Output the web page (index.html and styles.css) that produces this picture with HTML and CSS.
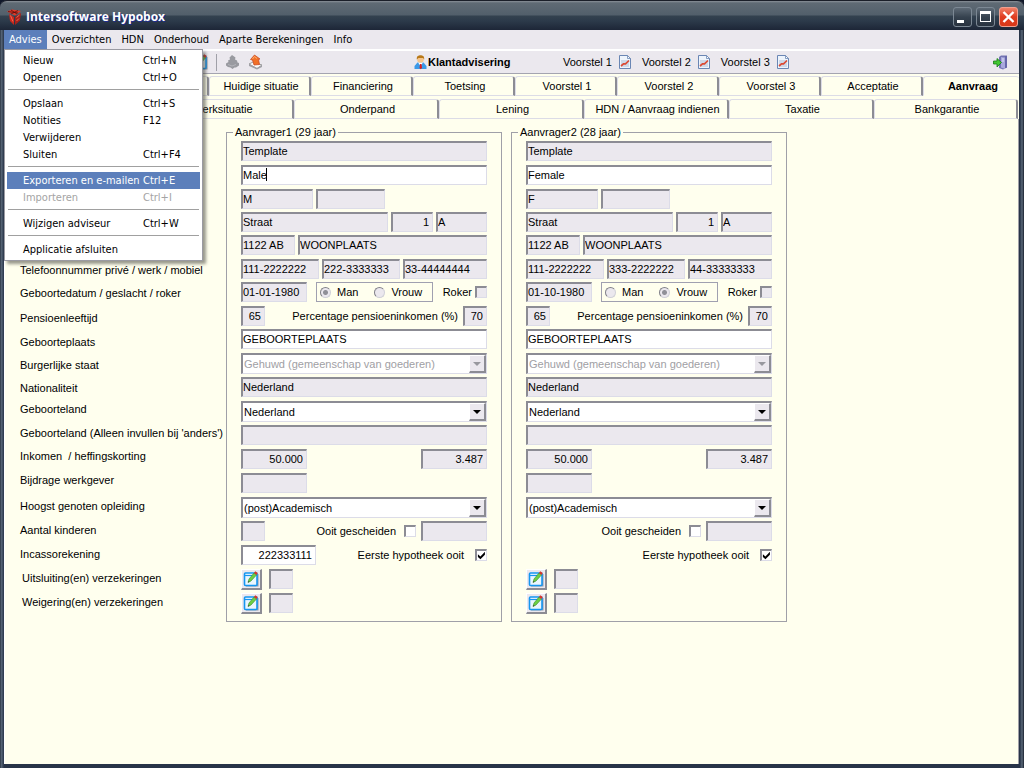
FILE: index.html
```html
<!DOCTYPE html>
<html lang="nl">
<head>
<meta charset="utf-8">
<title>Intersoftware Hypobox</title>
<link rel="stylesheet" href="styles.css">
</head>
<body>
<svg class="symbols" aria-hidden="true">
  <symbol id="i-chart" viewBox="0 0 12 14">
    <path d="M.5.5h8l3 3v10H.5z" fill="#eef4fc" stroke="#6a86b4"/>
    <path d="M8.500 .5v3h3z" fill="#fff" stroke="#6a86b4" stroke-width=".8"/>
    <path d="M2 5h8v7H2z" fill="#cdd8e8"/>
    <path d="M2 11l2.500-2.200h2L10 5.500" fill="none" stroke="#dc4a34" stroke-width="1.700"/>
  </symbol>
  <symbol id="i-edit" viewBox="0 0 16 16">
    <path d="M3 3h12.500v12.500H3z" fill="#8e98a8"/>
    <rect x="1.500" y="2" width="12.500" height="12.500" rx="1" fill="#eaf6ff" stroke="#1696f0" stroke-width="1.600"/>
    <path d="M1.500 4.500h9" stroke="#1696f0" stroke-width="1.200"/>
    <path d="M5 11.500l1-3.500 5-6 2.500 2-5.500 6z" fill="#6cd044" stroke="#3a8a2a" stroke-width=".6"/>
    <path d="M11 2l1.200-1.700 2.600 1.800-1.300 1.900z" fill="#d8352a"/>
    <path d="M5 11.500l.6-1.600 1 .9z" fill="#333"/>
  </symbol>
</svg>
<div class="window">
  <header class="titlebar">
    <svg class="logo" viewBox="0 0 15 16" aria-hidden="true">
      <path d="M2 5l5 3v8l-4-4z" fill="#c8281c"/><path d="M14 4L8 8v8l5-4.500z" fill="#a8201a"/>
      <path d="M0 2.500L5 .5l9 1.500-6 4.500z" fill="#e23a28"/><path d="M1 2.500l10 1.500M4 1l6 4M11 1.500L4 5" stroke="#5a0f0c" stroke-width=".8"/>
      <path d="M3.500 6.500l2.500 6M9.500 8.500l3-2.500M9.500 12l2.500-2.500" stroke="#ff7a60" stroke-width=".8"/>
    </svg>
    <h1>Intersoftware Hypobox</h1>
    <div class="winbuttons">
      <button aria-label="Minimaliseren"><svg viewBox="0 0 17 18"><path d="M3 12h7v3H3z" fill="#fff"/></svg></button>
      <button aria-label="Maximaliseren"><svg viewBox="0 0 17 18"><path d="M3 3h11v11H3zM4 6v7h9V6z" fill="#fff" fill-rule="evenodd"/></svg></button>
      <button class="close" aria-label="Sluiten"><svg viewBox="0 0 17 18"><path d="M3.500 4l10 10M13.500 4l-10 10" stroke="#fff" stroke-width="2.400"/></svg></button>
    </div>
  </header>

  <nav class="menubar">
    <div class="menu">
      <button class="open">Advies</button>
      <div class="popup">
        <button><span>Nieuw</span><span>Ctrl+N</span></button>
        <button><span>Openen</span><span>Ctrl+O</span></button>
        <hr>
        <button><span>Opslaan</span><span>Ctrl+S</span></button>
        <button><span>Notities</span><span>F12</span></button>
        <button><span>Verwijderen</span></button>
        <button><span>Sluiten</span><span>Ctrl+F4</span></button>
        <hr>
        <button class="current"><span>Exporteren en e-mailen</span><span>Ctrl+E</span></button>
        <button disabled><span>Importeren</span><span>Ctrl+I</span></button>
        <hr>
        <button><span>Wijzigen adviseur</span><span>Ctrl+W</span></button>
        <hr>
        <button><span>Applicatie afsluiten</span></button>
      </div>
    </div>
    <button>Overzichten</button>
    <button>HDN</button>
    <button>Onderhoud</button>
    <button>Aparte Berekeningen</button>
    <button>Info</button>
  </nav>

  <div class="toolbar">
    <div class="tools">
      <button aria-label="Bewerken"><svg width="16" height="16"><use href="#i-edit"/></svg></button>
      <span class="divider"></span>
      <button aria-label="Importeren" disabled><svg width="15" height="16" viewBox="0 0 15 16"><path d="M7 1l3.500 2.500-.5 2 2 1 .5 2 1.500.5v2.500L11 13.500H9.500L7.500 15l-2-1.500L3 13l-2-1.500V9.500L3.500 8 3 6.500l2-1-.5-2z" fill="#999aa0"/><path d="M3 10.500l4 1.500 4-1.500" fill="none" stroke="#b4b4ba"/></svg></button>
      <button aria-label="Exporteren"><svg width="15" height="16" viewBox="0 0 15 16"><path d="M1 10l4-2 9 3-5 3.500z" fill="#fafafa" stroke="#888" stroke-width=".8"/><path d="M1 10l8 4 5-3v2l-5 2.500L1 12z" fill="#a0a0a6"/><path d="M2.500 5.500l4-4.500 5.500 4-1.500.5 1 5L6 11 4.500 6z" fill="#f07028" stroke="#c8421a" stroke-width=".7"/><path d="M4.500 5l2-2.500L9 4.500" fill="none" stroke="#ffb070"/></svg></button>
    </div>
    <button class="mode"><svg width="13" height="15" viewBox="0 0 13 15"><path d="M.5 14v-3l3-3.500h6l3 3.500v3z" fill="#3c9ae8"/><path d="M4 7.500h5L6.500 11z" fill="#fff"/><path d="M6 9h1.500l.5 4-1.300 1.200L5.500 13z" fill="#d82020"/><circle cx="6.500" cy="4.500" r="3.300" fill="#f6c58c"/><path d="M2.800 4.500C2.500 1 4.500.3 6.500.3S10.500 1 10.200 4.500L9 3H4.500z" fill="#b87818"/></svg>Klantadvisering</button>
    <div class="proposals">
      <button>Voorstel 1<svg width="12" height="14"><use href="#i-chart"/></svg></button>
      <button>Voorstel 2<svg width="12" height="14"><use href="#i-chart"/></svg></button>
      <button>Voorstel 3<svg width="12" height="14"><use href="#i-chart"/></svg></button>
    </div>
    <button class="exit" aria-label="Afsluiten"><svg width="15" height="15" viewBox="0 0 15 15"><path d="M6 2l2-1.500h6v12L10 14.500 6 13z" fill="#7474b4"/><path d="M8 2l4 .500v11.500l-4-1.500z" fill="#a8a8dc"/><path d="M9 4h2M9 6h2" stroke="#e0e0f8"/><path d="M13 1v12" stroke="#5858a0"/><path d="M.5 6H4V3.500l4.500 4L4 12V9H.5z" fill="#42c832" stroke="#187818" stroke-width=".8"/></svg></button>
  </div>

  <nav class="tabs tabs-main">
    <span class="tab"></span><span class="tab"></span>
    <button class="tab">Huidige situatie</button>
    <button class="tab">Financiering</button>
    <button class="tab">Toetsing</button>
    <button class="tab">Voorstel 1</button>
    <button class="tab">Voorstel 2</button>
    <button class="tab">Voorstel 3</button>
    <button class="tab">Acceptatie</button>
    <button class="tab active">Aanvraag</button>
  </nav>
  <nav class="tabs tabs-sub">
    <span class="tab"></span>
    <button class="tab">Werksituatie</button>
    <button class="tab">Onderpand</button>
    <button class="tab">Lening</button>
    <button class="tab">HDN / Aanvraag indienen</button>
    <button class="tab">Taxatie</button>
    <button class="tab">Bankgarantie</button>
  </nav>

  <main class="content">
    <div class="labels">
      <span>Telefoonnummer privé / werk / mobiel</span>
      <span>Geboortedatum / geslacht / roker</span>
      <span>Pensioenleeftijd</span>
      <span>Geboorteplaats</span>
      <span>Burgerlijke staat</span>
      <span>Nationaliteit</span>
      <span>Geboorteland</span>
      <span>Geboorteland (Alleen invullen bij 'anders')</span>
      <span>Inkomen&nbsp; / heffingskorting</span>
      <span>Bijdrage werkgever</span>
      <span>Hoogst genoten opleiding</span>
      <span>Aantal kinderen</span>
      <span>Incassorekening</span>
      <span class="indent">Uitsluiting(en) verzekeringen</span>
      <span class="indent">Weigering(en) verzekeringen</span>
    </div>

    <fieldset class="applicant">
      <legend>Aanvrager1 (29 jaar)</legend>
      <div class="row"><input class="grow" readonly aria-label="Sjabloon" value="Template"></div>
      <div class="row"><div class="edit grow"><input aria-label="Naam" value="Male"><i class="caret"></i></div></div>
      <div class="row"><input class="w72" readonly aria-label="Voorletters" value="M"><input class="w69" readonly aria-label="Tussenvoegsel"></div>
      <div class="row"><input class="grow" readonly aria-label="Straat" value="Straat"><input class="w42 num" readonly aria-label="Huisnummer" value="1"><input class="w51" readonly aria-label="Toevoeging" value="A"></div>
      <div class="row"><input class="w54" readonly aria-label="Postcode" value="1122 AB"><input class="grow" readonly aria-label="Plaats" value="WOONPLAATS"></div>
      <div class="row"><input class="w78" readonly aria-label="Telefoon privé" value="111-2222222"><input class="w78" readonly aria-label="Telefoon werk" value="222-3333333"><input class="grow" readonly aria-label="Telefoon mobiel" value="33-44444444"></div>
      <div class="row"><input class="w66" readonly aria-label="Geboortedatum" value="01-01-1980"><div class="gender"><label><input type="radio" name="g1" checked disabled>Man</label><label><input type="radio" name="g1" disabled>Vrouw</label></div><label class="tick push">Roker<input type="checkbox" disabled></label></div>
      <div class="row"><input class="w24 num" readonly aria-label="Pensioenleeftijd" value="65"><label class="push" for="p1">Percentage pensioeninkomen (%)</label><input class="w24 num" id="p1" readonly value="70"></div>
      <div class="row"><input class="grow" aria-label="Geboorteplaats" value="GEBOORTEPLAATS"></div>
      <div class="row"><div class="combo off"><select disabled aria-label="Burgerlijke staat"><option>Gehuwd (gemeenschap van goederen)</option></select></div></div>
      <div class="row"><input class="grow" readonly aria-label="Nationaliteit" value="Nederland"></div>
      <div class="row"><div class="combo"><select aria-label="Geboorteland"><option>Nederland</option></select></div></div>
      <div class="row"><input class="grow" readonly aria-label="Geboorteland anders"></div>
      <div class="row"><input class="w66 num" readonly aria-label="Inkomen" value="50.000"><input class="w66 num push" readonly aria-label="Heffingskorting" value="3.487"></div>
      <div class="row"><input class="w66" readonly aria-label="Bijdrage werkgever"></div>
      <div class="row"><div class="combo"><select aria-label="Hoogst genoten opleiding"><option>(post)Academisch</option></select></div></div>
      <div class="row"><input class="w24" readonly aria-label="Aantal kinderen"><label class="tick push">Ooit gescheiden<input type="checkbox"></label><input class="w66" readonly aria-label="Gescheiden sinds"></div>
      <div class="row"><input class="w75 num" aria-label="Incassorekening" value="222333111"><label class="tick wide push">Eerste hypotheek ooit<input type="checkbox" checked></label></div>
      <div class="row"><button class="pen" aria-label="Uitsluitingen bewerken"><svg width="16" height="16"><use href="#i-edit"/></svg></button><input class="w24" readonly aria-label="Uitsluitingen"></div>
      <div class="row"><button class="pen" aria-label="Weigeringen bewerken"><svg width="16" height="16"><use href="#i-edit"/></svg></button><input class="w24" readonly aria-label="Weigeringen"></div>
    </fieldset>

    <fieldset class="applicant">
      <legend>Aanvrager2 (28 jaar)</legend>
      <div class="row"><input class="grow" readonly aria-label="Sjabloon" value="Template"></div>
      <div class="row"><input class="grow" aria-label="Naam" value="Female"></div>
      <div class="row"><input class="w72" readonly aria-label="Voorletters" value="F"><input class="w69" readonly aria-label="Tussenvoegsel"></div>
      <div class="row"><input class="grow" readonly aria-label="Straat" value="Straat"><input class="w42 num" readonly aria-label="Huisnummer" value="1"><input class="w51" readonly aria-label="Toevoeging" value="A"></div>
      <div class="row"><input class="w54" readonly aria-label="Postcode" value="1122 AB"><input class="grow" readonly aria-label="Plaats" value="WOONPLAATS"></div>
      <div class="row"><input class="w78" readonly aria-label="Telefoon privé" value="111-2222222"><input class="w78" readonly aria-label="Telefoon werk" value="333-2222222"><input class="grow" readonly aria-label="Telefoon mobiel" value="44-33333333"></div>
      <div class="row"><input class="w66" readonly aria-label="Geboortedatum" value="01-10-1980"><div class="gender"><label><input type="radio" name="g2" disabled>Man</label><label><input type="radio" name="g2" checked disabled>Vrouw</label></div><label class="tick push">Roker<input type="checkbox" disabled></label></div>
      <div class="row"><input class="w24 num" readonly aria-label="Pensioenleeftijd" value="65"><label class="push" for="p2">Percentage pensioeninkomen (%)</label><input class="w24 num" id="p2" readonly value="70"></div>
      <div class="row"><input class="grow" aria-label="Geboorteplaats" value="GEBOORTEPLAATS"></div>
      <div class="row"><div class="combo off"><select disabled aria-label="Burgerlijke staat"><option>Gehuwd (gemeenschap van goederen)</option></select></div></div>
      <div class="row"><input class="grow" readonly aria-label="Nationaliteit" value="Nederland"></div>
      <div class="row"><div class="combo"><select aria-label="Geboorteland"><option>Nederland</option></select></div></div>
      <div class="row"><input class="grow" readonly aria-label="Geboorteland anders"></div>
      <div class="row"><input class="w66 num" readonly aria-label="Inkomen" value="50.000"><input class="w66 num push" readonly aria-label="Heffingskorting" value="3.487"></div>
      <div class="row"><input class="w66" readonly aria-label="Bijdrage werkgever"></div>
      <div class="row"><div class="combo"><select aria-label="Hoogst genoten opleiding"><option>(post)Academisch</option></select></div></div>
      <div class="row"><label class="tick push">Ooit gescheiden<input type="checkbox"></label><input class="w66" readonly aria-label="Gescheiden sinds"></div>
      <div class="row"><label class="tick wide push">Eerste hypotheek ooit<input type="checkbox" checked></label></div>
      <div class="row"><button class="pen" aria-label="Uitsluitingen bewerken"><svg width="16" height="16"><use href="#i-edit"/></svg></button><input class="w24" readonly aria-label="Uitsluitingen"></div>
      <div class="row"><button class="pen" aria-label="Weigeringen bewerken"><svg width="16" height="16"><use href="#i-edit"/></svg></button><input class="w24" readonly aria-label="Weigeringen"></div>
    </fieldset>
  </main>
</div>
</body>
</html>
```

FILE: styles.css
```css
*, *::before, *::after { box-sizing: border-box; }

body {
  margin: 0;
  background: #10182a;
  color: #000;
  font: 11px/14px "Liberation Sans", Arial, sans-serif;
}

button, input, select { margin: 0; font: inherit; color: inherit; }
button { padding: 0; border: 0; background: none; }
svg { display: block; }
.symbols { position: absolute; width: 0; height: 0; }

/* Window frame */
.window {
  display: flex;
  flex-direction: column;
  min-height: 100vh;
  padding: 0 5px 4px 4px;
  border-radius: 7px 7px 0 0;
  background: linear-gradient(90deg, #18202e 0, #5a6878 1px, #4c5a6c 2px, #283448 4px, #283448 calc(100% - 4px), #5a6878 calc(100% - 2px), #18202e 100%);
}

.titlebar {
  display: flex;
  align-items: center;
  gap: 4px;
  height: 30px;
  margin: 0 -5px 0 -4px;
  padding: 2px 6px 0 7px;
  border-top: 1px solid #1a1e28;
  border-radius: 7px 7px 0 0;
  background: linear-gradient(#8a9098 0, #5f6a74 2px, #525f6b 14px, #33414f 15px, #2c3a4a 20px, #1d2637 29px);
}
.titlebar h1 {
  flex: 1;
  margin: 0;
  color: #fff;
  font: bold 12px/18px "Open Sans", "Noto Sans", sans-serif;
  text-shadow: 1px 1px 0 #1c2c90;
}
.logo { width: 15px; height: 16px; }
.winbuttons { display: flex; gap: 4px; }
.winbuttons button {
  width: 19px;
  height: 20px;
  border: 1px solid #7c8894;
  border-radius: 3px;
  background: linear-gradient(#5e6a76, #36424f 50%, #28323f);
}
.winbuttons .close { border-color: #f0a090; background: linear-gradient(#f08068, #e03c20 50%, #d83818); }

/* Menu bar */
.menubar {
  display: flex;
  height: 21px;
  border-bottom: 2px solid #fff;
  background: #ebe8ee;
  font: 11px/19px "DejaVu Sans Condensed", "Noto Sans", sans-serif;
}
.menubar > button, .menu > button { height: 19px; padding: 0 5px; }
.menu { position: relative; }
.menu > .open { background: #5c7fbb; color: #fff; }
.popup {
  position: absolute;
  z-index: 2;
  top: 19px;
  left: 0;
  width: 199px;
  padding: 2px;
  border: 1px solid #9a9aa2;
  background: #fff;
  box-shadow: 3px 3px 3px rgba(70, 70, 60, .55);
}
.popup button {
  display: grid;
  grid-template-columns: 120px 1fr;
  width: 100%;
  height: 17px;
  padding-left: 16px;
  line-height: 17px;
  text-align: left;
  white-space: nowrap;
}
.popup .current { background: #5c7fbb; color: #fff; }
.popup button:disabled { color: #a4a4a4; }
.popup hr { height: 1px; margin: 3px 1px 5px; border: 0; background: #a0a0a0; }

/* Toolbar */
.toolbar {
  display: grid;
  grid-template-columns: 410fr 149fr 430fr auto;
  align-items: center;
  height: 23px;
  padding-right: 11px;
  border-bottom: 1px solid #a4a4b0;
  background: #ebe8ee;
}
.toolbar button { display: flex; align-items: center; }
.tools { display: flex; align-items: center; gap: 8px; padding-left: 188px; }
.divider { width: 1px; height: 17px; background: #a0a0a8; }
.toolbar .mode { gap: 1px; font-weight: bold; }
.proposals { display: flex; gap: 11px; }
.proposals button { gap: 7px; }

/* Tab strips */
.tabs { display: grid; border: solid #fff; border-width: 0 0 0 1px; background: #ffffee; }
.tabs-main { grid-template-columns: 102fr repeat(8, 102fr) 96fr; padding-top: 2px; }
.tabs-sub { grid-template-columns: 144fr repeat(5, 145fr) 144fr; padding: 3px 1px 0 0; }
.tab {
  height: 20px;
  padding-left: 3px;
  border: solid;
  border-width: 1px 2px 1px 1px;
  border-color: #dcdce6 #8c8c94 #dcdce6 #dcdce6;
  border-radius: 3px 3px 0 0;
  text-align: center;
  white-space: nowrap;
}
.tab.active { border-right-width: 0; border-bottom-color: #ffffee; font-weight: bold; }

/* Form */
.content {
  display: flex;
  flex: 1;
  align-items: flex-start;
  gap: 9px;
  padding: 6px 0 0 15px;
  border-left: 1px solid #fff;
  border-right: 1px solid #a0a0a8;
  background: #ffffee;
}
.labels {
  display: grid;
  grid-template-rows: 23px 25px 24px 23px 23px 21px 24px 23px 24px 26px repeat(5, 24px);
  width: 197px;
  padding-top: 138px;
  white-space: nowrap;
}
.labels .indent { padding-left: 2px; }

.applicant {
  display: grid;
  grid-template-rows: 24px 24px 23px 23px 24px 23px 24px 23px repeat(12, 24px);
  width: 276px;
  min-width: 0;
  margin: 0;
  padding: 2px 14px 4px;
  border: 1px solid #a0a0a8;
}
.applicant legend { margin-left: -8px; padding: 0 2px; }
.row { display: flex; align-items: flex-start; gap: 3px; min-width: 0; }
.row > label { line-height: 20px; white-space: nowrap; }
.push { margin-left: auto; }
.row > label.push + input { margin-left: 2px; }

.row input:not([type]), .edit {
  height: 20px;
  min-width: 0;
  padding: 0 0 2px;
  border: solid;
  border-width: 2px 1px 1px 2px;
  border-color: #8c8c94 #dcdce8 #dcdce8 #8c8c94;
  border-radius: 0;
  outline: 0;
  background: #fff;
}
.row input:not([type])[readonly] { background: #ebe8ee; }
.row .grow { flex: 1; }
.row input.num { padding-right: 3px; text-align: right; }
.edit { display: flex; align-items: center; }
.edit input:not([type]) { width: 23px; height: 15px; padding: 0; border: 0; }
.caret { width: 1px; height: 13px; background: #000; }

.w24 { width: 24px; }
.w42 { width: 42px; }
.w51 { width: 51px; }
.w54 { width: 54px; }
.w66 { width: 66px; }
.w69 { width: 69px; }
.w72 { width: 72px; }
.w75 { width: 75px; }
.w78 { width: 78px; }

.gender {
  display: flex;
  align-items: center;
  gap: 16px;
  width: 117px;
  height: 20px;
  margin-left: 6px;
  padding-left: 3px;
  border: 1px solid #a0a0b0;
}
.gender label { display: flex; align-items: center; gap: 6px; }
input[type="radio"] {
  appearance: none;
  width: 11px;
  height: 11px;
  border: 1px solid;
  border-color: #808088 #d0d0d8 #d0d0d8 #808088;
  border-radius: 50%;
  background: #ebe8ee;
}
input[type="radio"]:checked { background: radial-gradient(circle, #909098 0, #909098 2px, #ebe8ee 3px); }

.tick { display: flex; align-items: center; gap: 3px; height: 20px; }
.tick input {
  appearance: none;
  width: 12px;
  height: 12px;
  border: solid;
  border-width: 2px 1px 1px 2px;
  border-color: #8c8c94 #dcdce8 #dcdce8 #8c8c94;
  background: #fff;
}
.tick input:disabled { background: #ebe8ee; }
.tick input:checked::before {
  content: "";
  display: block;
  width: 9px;
  height: 9px;
  background: #000;
  clip-path: polygon(10% 35%, 38% 60%, 88% 8%, 88% 42%, 38% 92%, 10% 66%);
}
.tick:not(:last-child) { gap: 8px; }
.tick.wide { gap: 11px; }

.combo {
  position: relative;
  flex: 1;
  height: 21px;
  border: solid;
  border-width: 2px 1px 1px 2px;
  border-color: #8c8c94 #dcdce8 #dcdce8 #8c8c94;
  background: #fff;
}
.combo select {
  display: block;
  appearance: none;
  width: 100%;
  height: 18px;
  padding: 0 20px 0 1px;
  border: 0;
  background: none;
}
.combo::before {
  content: "";
  position: absolute;
  top: 0;
  right: 0;
  width: 17px;
  height: 18px;
  border: solid;
  border-width: 1px 2px 2px 1px;
  border-color: #fff #8c8c94 #8c8c94 #fff;
  background: #ebe8ee;
}
.combo::after {
  content: "";
  position: absolute;
  top: 7px;
  right: 5px;
  border: solid transparent;
  border-width: 4px 4px 0;
  border-top-color: #000;
}
.combo.off select { color: #a0a0a4; opacity: 1; }
.combo.off::after { border-top-color: #98989e; }

.pen {
  width: 21px;
  height: 21px;
  margin-right: 4px;
  padding: 1px;
  border: solid;
  border-width: 1px 2px 2px 1px;
  border-color: #fff #8c8c94 #8c8c94 #fff;
  background: #ebe8ee;
}
```
